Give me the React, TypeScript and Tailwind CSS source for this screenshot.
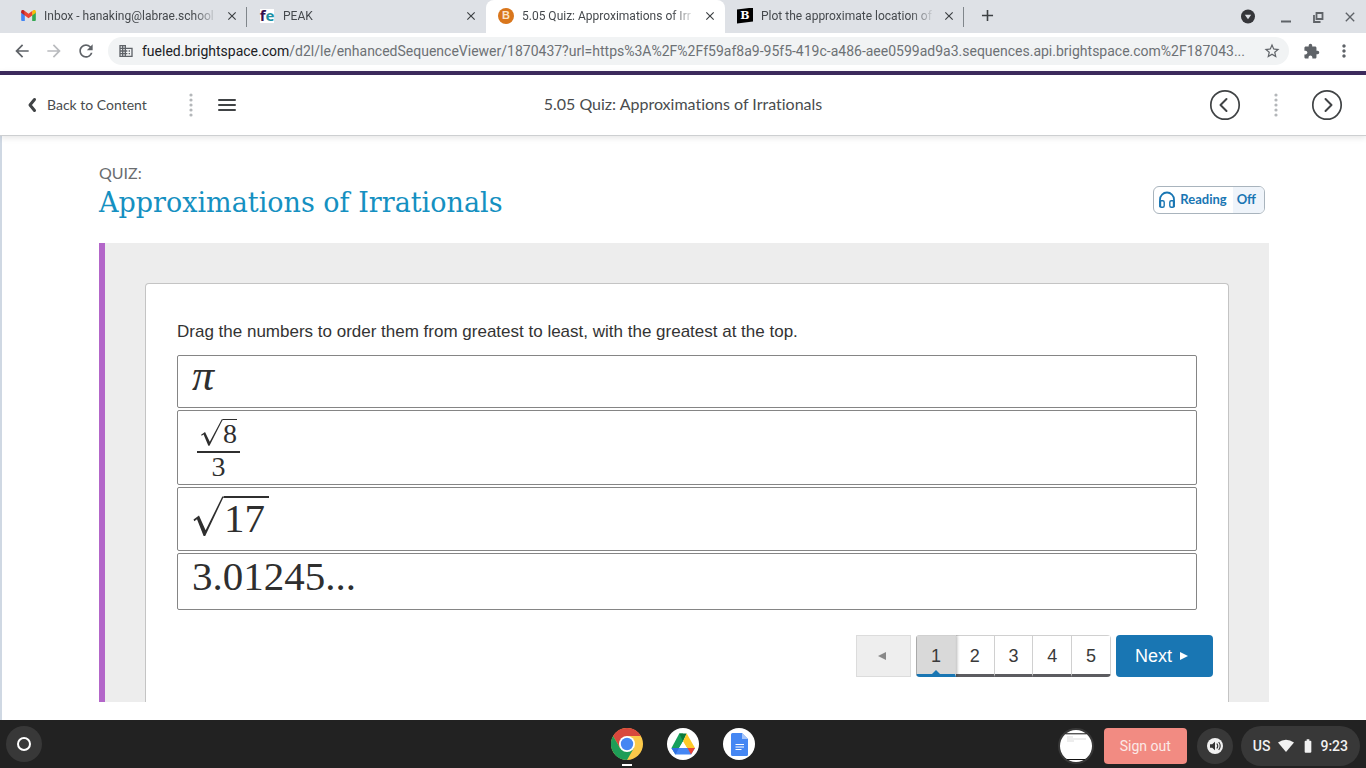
import React from 'react';
import {
  MdArrowBack, MdArrowForward, MdRefresh, MdBusiness, MdStarBorder, MdExtension, MdMoreVert,
  MdClose, MdAdd, MdBatteryFull,
} from 'react-icons/md';

interface TabProps {
  title: string;
  icon: React.ReactNode;
  active?: boolean;
  divider?: boolean;
}

const Tab: React.FC<TabProps> = ({ title, icon, active, divider }) => (
  <div
    className={
      'flex h-full w-[239px] min-w-0 items-center pr-[7px] pb-0.5 pl-3 ' +
      (active ? 'rounded-t-lg bg-white ' : '') +
      (divider ? 'bg-[linear-gradient(#80868b,#80868b)] bg-[length:1px_20px] bg-right bg-no-repeat' : '')
    }
  >
    <span className="flex size-4 shrink-0 items-center justify-center">{icon}</span>
    <span className="ml-2 min-w-0 flex-1 whitespace-nowrap text-xs text-[#45494d] [mask-image:linear-gradient(to_right,black_86%,transparent)]">
      {title}
    </span>
    <button aria-label="Close tab" className="ml-1.5 flex size-4 shrink-0 items-center justify-center text-[#3c4043]">
      <MdClose size={14} />
    </button>
  </div>
);

const GmailIcon = () => (
  <svg viewBox="0 0 16 12" className="h-[11px] w-[15px]">
    <path d="M0 1.5V11a1 1 0 0 0 1 1h3V5z" fill="#4285f4" />
    <path d="M16 1.5V11a1 1 0 0 1-1 1h-3V5z" fill="#34a853" />
    <path d="M12 1v5l4-3V1.500c0-1.500-1.600-2-2.700-1.300z" fill="#fbbc04" />
    <path d="M0 1.500C0 0 1.600-.5 2.700.2L4 1v5L0 3z" fill="#c5221f" />
    <path d="M4 1l4 3 4-3v5L8 9 4 6z" fill="#ea4335" />
  </svg>
);

const FuelIcon = () => (
  <span className="flex h-3.5 w-3.5 items-center justify-center bg-white font-['Open_Sans',sans-serif] text-[15px] leading-none font-bold">
    <span className="text-[#35104f]">f</span>
    <span className="text-[#1a8fa3]">e</span>
  </span>
);

const BuzzIcon = () => (
  <span className="flex size-4 items-center justify-center rounded-full bg-[#d9761c] font-['Liberation_Sans',sans-serif] text-[11px] leading-none font-bold text-[#fbe3c8]">
    B
  </span>
);

const BrainlyIcon = () => (
  <span className="flex size-4 items-center justify-center bg-black font-['DejaVu_Serif',serif] text-[11px] leading-none font-bold text-white [clip-path:polygon(0_12%,100%_0,100%_88%,0_100%)]">
    B
  </span>
);

const TabStrip = () => (
  <div className="flex h-[33px] items-center bg-[#dee1e6] pl-2">
    <Tab title="Inbox - hanaking@labrae.school" icon={<GmailIcon />} divider />
    <Tab title="PEAK" icon={<FuelIcon />} />
    <Tab title="5.05 Quiz: Approximations of Irr" icon={<BuzzIcon />} active />
    <Tab title="Plot the approximate location of" icon={<BrainlyIcon />} divider />
    <button aria-label="New tab" className="ml-3.5 pb-0.5 text-[#3c4043]"><MdAdd size={19} /></button>
    <div className="ml-auto flex items-center gap-4 pr-2 text-[#5f6368]">
      <button aria-label="Search tabs">
        <svg viewBox="0 0 16 16" className="size-4">
          <circle cx="8" cy="7.500" r="7" fill="#35363a" />
          <path d="M4.800 5.700h6.400L8 10.200z" fill="#dee1e6" />
        </svg>
      </button>
      <button aria-label="Minimize">
        <svg viewBox="0 0 16 16" className="ml-1.5 size-4"><path d="M3 12.500h10" stroke="currentColor" strokeWidth="2" /></svg>
      </button>
      <button aria-label="Restore">
        <svg viewBox="0 0 16 16" className="size-4" fill="none" stroke="currentColor" strokeWidth="1.800">
          <path d="M6.500 4h6v6h-6z" />
          <path d="M4 6v7h6.500" />
        </svg>
      </button>
      <button aria-label="Close window"><MdClose size={16} /></button>
    </div>
  </div>
);

const AddressBar = () => (
  <div className="flex h-[38px] items-center bg-white px-3 pb-0.5 text-[#5f6368]">
    <button aria-label="Back"><MdArrowBack size={20} /></button>
    <button aria-label="Forward" className="ml-3 text-[#b9bbbe]"><MdArrowForward size={20} /></button>
    <button aria-label="Reload" className="ml-3"><MdRefresh size={20} /></button>
    <div className="ml-3 flex h-7 min-w-0 flex-1 items-center rounded-full bg-[#f1f3f4] pl-2.5 pr-2">
      <MdBusiness size={16} className="shrink-0" />
      <p className="ml-2 min-w-0 flex-1 truncate text-sm text-[#6d7175]">
        <span className="text-[#202124]">fueled.brightspace.com</span>
        /d2l/le/enhancedSequenceViewer/1870437?url=https%3A%2F%2Ff59af8a9-95f5-419c-a486-aee0599ad9a3.sequences.api.brightspace.com%2F187043...
      </p>
      <button aria-label="Bookmark" className="ml-3"><MdStarBorder size={18} /></button>
    </div>
    <button aria-label="Extensions" className="ml-3.5"><MdExtension size={17} /></button>
    <button aria-label="Menu" className="ml-3.5"><MdMoreVert size={20} /></button>
  </div>
);

const Dots = () => (
  <svg viewBox="0 0 4 24" className="h-6 w-1" fill="#b4b7ba">
    {[2, 7, 12, 17, 22].map(y => <circle key={y} cx="2" cy={y} r="1.600" />)}
  </svg>
);

const CircleArrow: React.FC<{ label: string; d: string }> = ({ label, d }) => (
  <button aria-label={label}>
    <svg viewBox="0 0 32 32" className="size-8" fill="none" stroke="#404345" strokeWidth="1.700">
      <circle cx="16" cy="16" r="14.200" />
      <path d={d} strokeWidth="2" strokeLinecap="round" strokeLinejoin="round" />
    </svg>
  </button>
);

const CourseHeader = () => (
  <header className="relative grid h-[65px] grid-cols-[1fr_auto_1fr] items-center border-t-4 border-b border-t-[#3c2a5c] border-b-[#cdcfd1] bg-white px-6 font-['Lato',sans-serif] text-[#494c4e] shadow-[0_2px_6px_rgba(0,0,0,0.10)] [font-variant-ligatures:none]">
    <div className="flex items-center">
      <a href="#content" className="flex items-center text-sm">
        <svg viewBox="0 0 16 16" className="mr-[7px] size-4" fill="none" stroke="#404345" strokeWidth="3" strokeLinecap="round" strokeLinejoin="round">
          <path d="M10.500 2.500L6 8l4.500 5.500" />
        </svg>
        Back to Content
      </a>
      <span className="ml-[42px]"><Dots /></span>
      <button aria-label="Open menu" className="ml-6">
        <svg viewBox="0 0 20 16" className="h-4 w-5" stroke="#404345" strokeWidth="2" strokeLinecap="round">
          <path d="M2 3h16M2 8h16M2 13h16" />
        </svg>
      </button>
    </div>
    <h2 className="pb-0.5 text-base">5.05 Quiz: Approximations of Irrationals</h2>
    <div className="-mr-px flex items-center justify-end gap-[33px]">
      <CircleArrow label="Previous activity" d="M17.500 10l-6 6 6 6" />
      <Dots />
      <CircleArrow label="Next activity" d="M14.500 10l6 6-6 6" />
    </div>
  </header>
);

const Radical: React.FC<{ small?: boolean; children: React.ReactNode }> = ({ small, children }) => (
  <span className="inline-flex">
    <svg
      viewBox="0 0 32 42"
      className={small ? 'h-7 w-[23px]' : 'h-[42px] w-8'}
      preserveAspectRatio="none"
      fill="#2f2f2f"
    >
      <path d="M1.500 23.500L7 19.500l6.600 14.800L30.300.5H32v1.300h-.8L13.200 40h-1.600L5 23.300l-2.700 2z" />
    </svg>
    <span className={'border-t-[#2f2f2f] ' + (small ? 'h-7 border-t text-[28px] leading-7' : 'h-[42px] border-t-2 pr-1 leading-10')}>
      {children}
    </span>
  </span>
);

const items = [
  {
    id: 'pi',
    size: 'h-[53px]',
    body: <span className="text-[44px] leading-10 italic">π</span>,
  },
  {
    id: 'frac',
    size: 'h-[75px] pl-[19px] pt-2',
    body: (
      <span className="inline-flex flex-col items-center">
        <span className="flex border-b-2 border-[#2f2f2f] px-[3px] pb-1"><Radical small>8</Radical></span>
        <span className="text-[28px] leading-7">3</span>
      </span>
    ),
  },
  { id: 'sqrt17', size: 'h-16 pt-2', body: <Radical>17</Radical> },
  { id: 'dec', size: 'h-[57px]', body: '3.01245...' },
];

const Pager = () => (
  <nav className="mt-[25px] -mr-4 flex h-[42px] justify-end gap-[5px] text-lg text-[#3a3a3a]">
    <button aria-label="Previous" disabled className="flex w-[55px] items-center justify-center border border-[#dcdcdc] bg-[#eeeeee] pr-1">
      <svg viewBox="0 0 8 8" className="size-2" fill="#888"><path d="M8 0v8L0 4z" /></svg>
    </button>
    <div className="flex w-[195px] overflow-hidden rounded-sm">
      {[1, 2, 3, 4, 5].map(n => (
        <button
          key={n}
          className={
            'relative flex-1 border-t border-r border-t-[#d0d0d0] pt-0.5 ' +
            (n === 1
              ? 'z-10 border-r-[#d6d6d6] border-b-[3px] border-b-[#1976b3] border-l border-l-[#aaa] bg-[#d9d9d9] shadow-[1px_0_3px_rgba(0,0,0,0.3)]'
              : 'border-r-[#d0d0d0] border-b-[3px] border-b-[#5c5c60] bg-white')
          }
        >
          {n}
          {n === 1 && (
            <svg viewBox="0 0 8 4" className="absolute bottom-0 left-1/2 h-1 w-2 -translate-x-1/2" fill="#1976b3">
              <path d="M4 0l4 4H0z" />
            </svg>
          )}
        </button>
      ))}
    </div>
    <button className="flex w-[97px] items-center justify-center gap-2 rounded-sm bg-[#1976b3] pr-1.5 text-white">
      Next
      <svg viewBox="0 0 8 8" className="size-2" fill="white"><path d="M0 0v8l8-4z" /></svg>
    </button>
  </nav>
);

const Quiz = () => (
  <main className="flex flex-1 flex-col border-l-2 border-[#cfd8e3] bg-white pr-[97px] pb-[18px] pl-[97px]">
    <div className="flex items-center justify-between pt-[27px] pr-1">
      <div>
        <p className="font-['Lato',sans-serif] text-base leading-5 text-[#6a6d70]">QUIZ:</p>
        <h1 className="mt-0.5 font-['DejaVu_Serif',serif] text-[27px] leading-9 text-[#1590c1]">Approximations of Irrationals</h1>
      </div>
      <button className="mt-4 flex h-7 items-center overflow-hidden rounded-md border border-[#a9b4bd] font-['Lato',sans-serif] text-[13px] font-bold text-[#1976b3]">
        <svg viewBox="0 0 18 18" className="ml-1 size-[18px]" fill="none" stroke="currentColor">
          <path d="M2 12V8.500a7 7 0 0 1 14 0V12" strokeWidth="1.800" />
          <rect x="1.800" y="9.800" width="4.400" height="6.400" rx="1.500" strokeWidth="1.400" />
          <rect x="11.800" y="9.800" width="4.400" height="6.400" rx="1.500" strokeWidth="1.400" />
          <path d="M2.200 10v6M15.800 10v6" strokeWidth="2" />
        </svg>
        <span className="mr-1.5 ml-1">Reading</span>
        <span className="flex h-full items-center bg-[#eff4fa] pr-2 pl-1">Off</span>
      </button>
    </div>
    <div className="mt-[22px] flex flex-1 border-l-[6px] border-[#b366c9] bg-[#ededed] px-10 pt-10">
      <section className="flex-1 rounded-t border border-b-0 border-[#c4c4c4] bg-white px-[31px] pt-9 font-['Liberation_Sans',Arial,sans-serif]">
        <p className="text-[17px] leading-6 text-[#333]">
          Drag the numbers to order them from greatest to least, with the greatest at the top.
        </p>
        <ul className="mt-[11px] flex flex-col gap-0.5 font-['Liberation_Serif',serif] text-[41px] leading-[44px] text-[#2f2f2f]">
          {items.map(item => (
            <li key={item.id} draggable className={'flex items-start rounded-xs border border-[#858585] bg-white px-3.5 ' + item.size}>
              {item.body}
            </li>
          ))}
        </ul>
        <Pager />
      </section>
    </div>
  </main>
);

const ChromeIcon = () => (
  <svg viewBox="0 0 32 32" className="size-8">
    <circle cx="16" cy="16" r="16" fill="#fbc94a" />
    <path d="M2.140 8A16 16 0 0 1 29.860 8H16l-7 12z" fill="#d8483d" />
    <path d="M2.140 8A16 16 0 0 0 16 32l6.900-12L16 23.500 9 20z" fill="#1e9d57" />
    <circle cx="16" cy="16" r="8" fill="#fff" />
    <circle cx="16" cy="16" r="6.200" fill="#4587f3" />
  </svg>
);

const DriveIcon = () => (
  <svg viewBox="0 0 32 32" className="size-8">
    <circle cx="16" cy="16" r="16" fill="#fff" />
    <path d="M12.300 5.500H16v8L8.500 26.500 4.500 20z" fill="#16a05d" />
    <path d="M12.300 5.500h7.400L16 13.500z" fill="#0c7a3b" />
    <path d="M16 13.500l3.700-8L28 20h-8z" fill="#ffca28" />
    <path d="M4.500 20H28l-4 6.500H8.500z" fill="#4587f3" />
    <path d="M4.500 20H12l-3.500 6.500z" fill="#2f6fe0" />
    <path d="M28 20h-7.500l3.500 6.500z" fill="#ea4335" />
    <path d="M16 13.500l3.800 6.500h-7.600z" fill="#fff" />
  </svg>
);

const DocsIcon = () => (
  <svg viewBox="0 0 32 32" className="size-8">
    <circle cx="16" cy="16" r="16" fill="#fff" />
    <path d="M9.500 5H19l6 6v15.500a1.500 1.500 0 0 1-1.500 1.500h-14A1.500 1.500 0 0 1 8 26.500v-20A1.500 1.500 0 0 1 9.500 5z" fill="#4587f3" />
    <path d="M19 5l6 6h-6z" fill="#a6c5fa" />
    <path d="M12.500 16.500h8.500M12.500 19h8.500M12.500 21.500h6" stroke="#fff" strokeWidth="1.200" />
  </svg>
);

const Shelf = () => (
  <footer className="grid h-12 grid-cols-[1fr_auto_1fr] items-center bg-[#222222] px-1.5">
    <button aria-label="Launcher" className="flex size-9 items-center justify-center rounded-full bg-[#383838]">
      <span className="size-3.5 rounded-full border-2 border-white" />
    </button>
    <div className="flex gap-6">
      <button aria-label="Chrome" className="relative">
        <ChromeIcon />
        <span className="absolute -bottom-[6px] left-1/2 h-0.5 w-2.5 -translate-x-1/2 bg-white" />
      </button>
      <button aria-label="Drive"><DriveIcon /></button>
      <button aria-label="Docs"><DocsIcon /></button>
    </div>
    <div className="flex items-center justify-end pt-1">
      <button aria-label="Recent capture" className="mr-2.5 rounded-full border-2 border-[#383838]">
        <svg viewBox="0 0 32 32" className="size-8">
          <circle cx="16" cy="16" r="16" fill="#fff" />
          <path d="M5.500 3.800h21M7 29.500h18" stroke="#111" strokeWidth="1" />
          <path d="M7 7h6M7 9h19M7 11h7" stroke="#ccc" strokeWidth="0.700" />
        </svg>
      </button>
      <button className="mr-2.5 h-9 rounded-sm bg-[#f28b82] px-4 text-sm text-[#fbe9e7]">Sign out</button>
      <button aria-label="Select to speak" className="mr-2 flex size-9 items-center justify-center rounded-full bg-[#383838]">
        <svg viewBox="0 0 18 18" className="size-[18px]">
          <circle cx="9" cy="9" r="8" fill="#f1f1f1" />
          <path d="M4 7.300h2.200L9 4.800v8.400l-2.800-2.500H4z" fill="#333" />
          <path d="M10.800 6.500q2 2.500 0 5M12.700 5q3 4 0 8" fill="none" stroke="#333" strokeWidth="1.100" />
        </svg>
      </button>
      <button className="flex h-10 items-center rounded-full bg-[#383838] px-3 text-sm font-medium text-[#f1f1f1]">
        US
        <svg viewBox="0 0 16 14" className="ml-2 h-3.5 w-4" fill="currentColor"><path d="M0 3.500Q8-1.800 16 3.500L8 13z" /></svg>
        <MdBatteryFull size={16} className="ml-1.5" />
        <span className="ml-1">9:23</span>
      </button>
    </div>
  </footer>
);

export default function App() {
  return (
    <div className="flex min-h-screen flex-col bg-white font-['Roboto',sans-serif]">
      <TabStrip />
      <AddressBar />
      <CourseHeader />
      <Quiz />
      <Shelf />
    </div>
  );
}
